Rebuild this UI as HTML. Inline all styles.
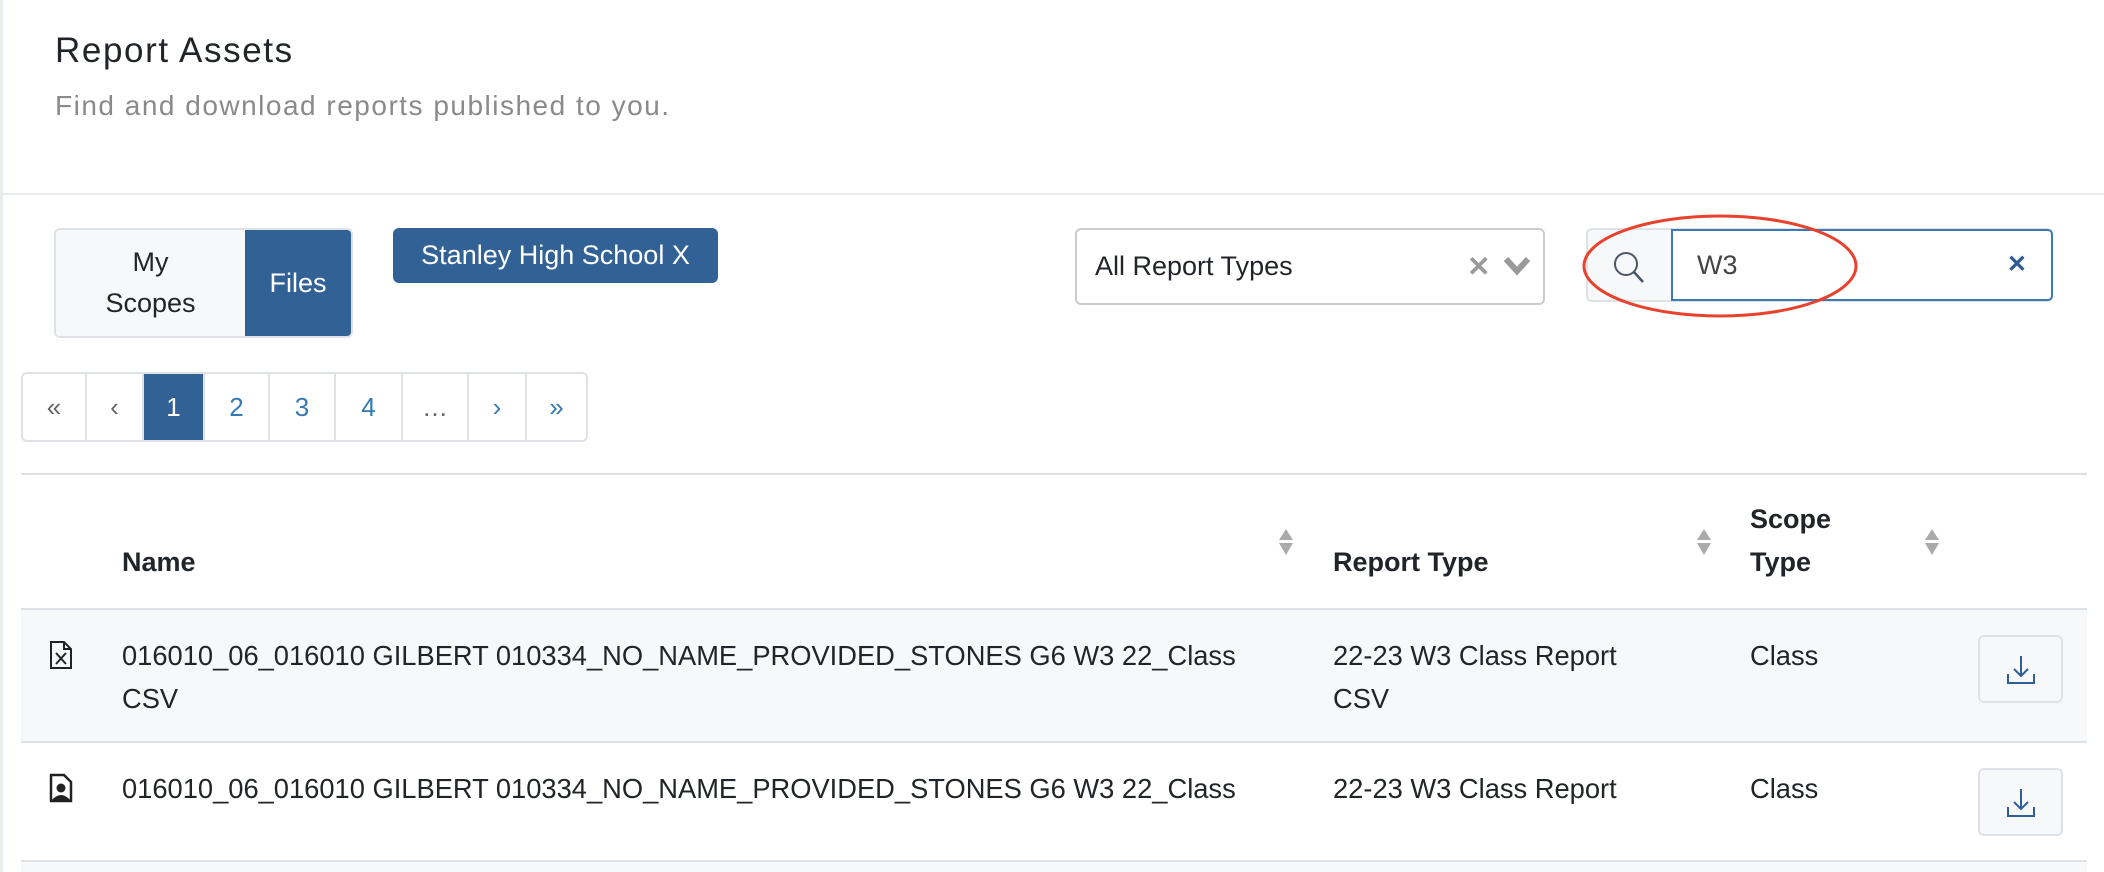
<!DOCTYPE html>
<html><head><meta charset="utf-8"><style>
*{box-sizing:border-box;margin:0;padding:0}
body{width:2104px;height:872px;background:#fff;font-family:"Liberation Sans",sans-serif;color:#212529;position:relative;overflow:hidden}
.a{position:absolute}
.pg{position:absolute;top:372px;height:70px;border:2px solid #dee2e6;border-radius:6px;display:flex;overflow:hidden;left:21px;width:567px}
.pg div{border-right:2px solid #dee2e6;display:flex;align-items:center;justify-content:center;font-size:26px;color:#337ab7}
.pg div:last-child{border-right:none}
.t{font-size:27.3px;line-height:43px}
.h{font-size:27px;font-weight:bold;line-height:43px}
.dl{position:absolute;left:1978px;width:85px;height:68px;border:2px solid #dee2e6;border-radius:6px;background:#f7f8fa}
.sort{position:absolute;width:16px}
</style></head><body>
<div class="a" style="left:0;top:0;width:3px;height:872px;background:#e9ecef"></div>
<div class="a" style="left:55px;top:31px;font-size:35px;color:#212529;letter-spacing:1.6px">Report Assets</div>
<div class="a" style="left:55px;top:90px;font-size:28px;color:#8a8a8a;letter-spacing:1.5px">Find and download reports published to you.</div>
<div class="a" style="left:3px;top:193px;width:2101px;height:2px;background:#e9ecef"></div>

<div class="a" style="left:54px;top:228px;width:299px;height:110px;border:2px solid #dee2e6;border-radius:6px;overflow:hidden;display:flex">
 <div style="width:189px;background:#f7f8fa;display:flex;align-items:center;justify-content:center;text-align:center;font-size:27px;line-height:41px">My<br>Scopes</div>
 <div style="flex:1;background:#326295;color:#fff;display:flex;align-items:center;justify-content:center;font-size:27px">Files</div>
</div>
<div class="a" style="left:393px;top:228px;width:325px;height:55px;background:#326295;border-radius:6px;color:#fff;font-size:27px;line-height:55px;text-align:center">Stanley High School X</div>

<div class="a" style="left:1075px;top:228px;width:470px;height:77px;border:2px solid #ccc;border-radius:6px;font-size:27px;line-height:73px;padding-left:18px">All Report Types
 <span style="position:absolute;left:390px;top:0;color:#999;font-weight:bold;font-size:28px">✕</span>
 <svg style="position:absolute;left:426px;top:26px" width="28" height="20" viewBox="0 0 28 20"><path d="M3 3 L14 15 L25 3" stroke="#999" stroke-width="6" fill="none"/></svg>
</div>
<div class="a" style="left:1586px;top:228px;width:467px;height:74px;border:2px solid #dee2e6;border-radius:6px;background:#f7f8fa"></div>
<svg class="a" style="left:1610px;top:248px" width="40" height="40" viewBox="0 0 40 40"><circle cx="16" cy="16" r="11" stroke="#4a5566" stroke-width="2" fill="none"/><path d="M24 24 L33 34" stroke="#4a5566" stroke-width="2.5"/></svg>
<div class="a" style="left:1671px;top:229px;width:382px;height:72px;border:2px solid #3d7ab5;border-radius:0 5px 5px 0;background:#fff;font-size:27px;line-height:68px;padding-left:24px;color:#444">W3
 <span style="position:absolute;right:24px;top:0;color:#2f5a91;font-weight:bold;font-size:24px">✕</span></div>
<svg class="a" style="left:1580px;top:212px" width="280" height="110"><ellipse cx="140" cy="54" rx="136" ry="50" stroke="#e8412c" stroke-width="3" fill="none"/></svg>

<div class="pg">
 <div style="width:64px;color:#666">«</div>
 <div style="width:57px;color:#666">‹</div>
 <div style="width:61px;background:#326295;color:#fff">1</div>
 <div style="width:65px">2</div>
 <div style="width:66px">3</div>
 <div style="width:67px">4</div>
 <div style="width:66px;color:#666">…</div>
 <div style="width:58px">›</div>
 <div style="flex:1">»</div>
</div>

<div class="a" style="left:21px;top:473px;width:2066px;height:2px;background:#dee2e6"></div>
<div class="a h" style="left:122px;top:541px">Name</div>
<div class="a h" style="left:1333px;top:541px">Report Type</div>
<div class="a h" style="left:1750px;top:498px">Scope<br>Type</div>
<svg class="sort" style="left:1278px;top:528px" width="16" height="28" viewBox="0 0 16 28"><path d="M8 1 L15 12 H1Z M1 15 H15 L8 27Z" fill="#aaa"/></svg>
<svg class="sort" style="left:1696px;top:528px" width="16" height="28" viewBox="0 0 16 28"><path d="M8 1 L15 12 H1Z M1 15 H15 L8 27Z" fill="#aaa"/></svg>
<svg class="sort" style="left:1924px;top:528px" width="16" height="28" viewBox="0 0 16 28"><path d="M8 1 L15 12 H1Z M1 15 H15 L8 27Z" fill="#aaa"/></svg>
<div class="a" style="left:21px;top:608px;width:2066px;height:2px;background:#dee2e6"></div>

<div class="a" style="left:21px;top:610px;width:2066px;height:131px;background:#f7f8fa"></div>
<svg class="a" style="left:49px;top:640px" width="24" height="30" viewBox="0 0 24 30"><path d="M2 2 H15 L22 9 V28 H2Z M15 2 V9 H22" stroke="#222" stroke-width="2" fill="none"/><path d="M7 13 L17 24 M17 13 L7 24" stroke="#222" stroke-width="2"/></svg>
<div class="a t" style="left:122px;top:634px">016010_06_016010 GILBERT 010334_NO_NAME_PROVIDED_STONES G6 W3 22_Class<br>CSV</div>
<div class="a t" style="left:1333px;top:634px">22-23 W3 Class Report<br>CSV</div>
<div class="a t" style="left:1750px;top:634px">Class</div>
<div class="dl" style="top:635px"></div>
<div class="a" style="left:21px;top:741px;width:2066px;height:2px;background:#dee2e6"></div>

<svg class="a" style="left:49px;top:773px" width="24" height="30" viewBox="0 0 24 30"><path d="M2 2 H15 L22 9 V28 H2Z" stroke="#222" stroke-width="2.5" fill="none"/><circle cx="12" cy="15" r="4.5" fill="#222"/><path d="M2 28 Q12 16 22 28Z" fill="#222"/></svg>
<div class="a t" style="left:122px;top:767px">016010_06_016010 GILBERT 010334_NO_NAME_PROVIDED_STONES G6 W3 22_Class</div>
<div class="a t" style="left:1333px;top:767px">22-23 W3 Class Report</div>
<div class="a t" style="left:1750px;top:767px">Class</div>
<div class="dl" style="top:768px"></div>
<div class="a" style="left:21px;top:860px;width:2066px;height:2px;background:#dee2e6"></div>
<div class="a" style="left:21px;top:862px;width:2066px;height:10px;background:#f7f8fa"></div>

<svg class="a" style="left:2003px;top:652px" width="36" height="36" viewBox="0 0 36 36"><path d="M18 4 V24 M11 17 L18 24 L25 17 M5 22 V31 H31 V22" stroke="#2f5f98" stroke-width="2" fill="none"/></svg>
<svg class="a" style="left:2003px;top:785px" width="36" height="36" viewBox="0 0 36 36"><path d="M18 4 V24 M11 17 L18 24 L25 17 M5 22 V31 H31 V22" stroke="#2f5f98" stroke-width="2" fill="none"/></svg>
</body></html>
